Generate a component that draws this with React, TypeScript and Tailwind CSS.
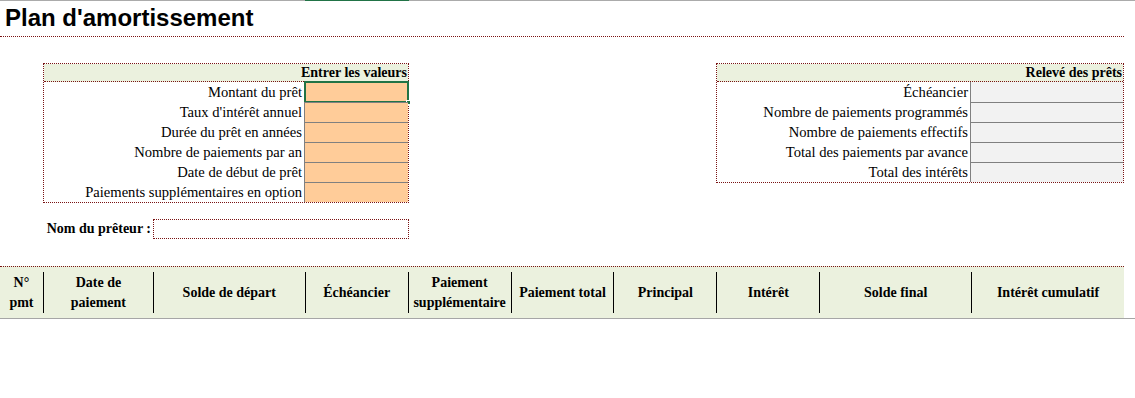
import React from "react";

const serif = "font-['Liberation_Serif',serif]";

const inputRows = [
  "Montant du prêt",
  "Taux d'intérêt annuel",
  "Durée du prêt en années",
  "Nombre de paiements par an",
  "Date de début de prêt",
  "Paiements supplémentaires en option",
];

const summaryRows = [
  "Échéancier",
  "Nombre de paiements programmés",
  "Nombre de paiements effectifs",
  "Total des paiements par avance",
  "Total des intérêts",
];

const columns: { label: string[]; width: string }[] = [
  { label: ["N°", "pmt"], width: "w-[44px]" },
  { label: ["Date de", "paiement"], width: "w-[110px]" },
  { label: ["Solde de départ"], width: "w-[152px]" },
  { label: ["Échéancier"], width: "w-[103px]" },
  { label: ["Paiement", "supplémentaire"], width: "w-[103px]" },
  { label: ["Paiement total"], width: "w-[103px]" },
  { label: ["Principal"], width: "w-[103px]" },
  { label: ["Intérêt"], width: "w-[103px]" },
  { label: ["Solde final"], width: "w-[152px]" },
  { label: ["Intérêt cumulatif"], width: "w-[152px]" },
];

const FieldBox = ({
  title,
  rows,
  width,
  cellWidth,
  cellBg,
  selectFirst,
}: {
  title: string;
  rows: string[];
  width: string;
  cellWidth: string;
  cellBg: string;
  selectFirst?: boolean;
}) => {
  return (
    <div className={`${width} border border-dotted border-[#7a1414]`}>
      <div className="flex h-[18px] items-center justify-end border-b border-dotted border-[#7a1414] bg-[#ebf1de] pr-[1px] text-[14px] font-bold leading-none text-black">
        {title}
      </div>
      {rows.map((label, idx) => (
        <div key={label} className="flex h-[20px] items-stretch">
          <div className="flex flex-1 items-center justify-end pr-[2px] text-[14.6px] leading-none text-black">
            {label}
          </div>
          <div
            className={`relative ${cellWidth} ${cellBg} border-l border-[#808080] ${
              idx > 0 ? "border-t" : ""
            }`}
          >
            {selectFirst && idx === 0 && (
              <>
                <div className="absolute -top-[1px] -left-[1px] -right-[1px] -bottom-[1px] border-2 border-[#217346]" />
                <div className="absolute -right-[3px] -bottom-[3px] h-[5px] w-[5px] border border-white bg-[#217346]" />
              </>
            )}
          </div>
        </div>
      ))}
    </div>
  );
};

export default function App() {
  return (
    <div className={`relative h-[398px] w-[1135px] overflow-hidden bg-white ${serif}`}>
      {/* sheet top edge with the active column marker */}
      <div className="flex h-px">
        <div className="w-[305px] bg-[#ababab]" />
        <div className="w-[104px] bg-[#217346]" />
        <div className="flex-1 bg-[#ababab]" />
      </div>

      <div className="w-[1124px] border-b border-dotted border-[#7a1414] pb-[4px] pl-[5px] pt-[3px]">
        <h1 className="font-['Liberation_Sans',Arial,sans-serif] text-[24px] font-bold leading-[28px] text-black">
          Plan d'amortissement
        </h1>
      </div>

      <div className="mt-[26px] flex w-[1124px] items-start justify-between pl-[43px]">
        <FieldBox
          title="Entrer les valeurs"
          rows={inputRows}
          width="w-[366px]"
          cellWidth="w-[104px]"
          cellBg="bg-[#ffcc99]"
          selectFirst
        />
        <FieldBox
          title="Relevé des prêts"
          rows={summaryRows}
          width="w-[408px]"
          cellWidth="w-[153px]"
          cellBg="bg-[#f2f2f2]"
        />
      </div>

      <div className="mt-[16px] flex h-[20px] items-stretch pl-[43px]">
        <div className="flex w-[110px] items-center justify-end pr-[2px] text-[14px] font-bold leading-none text-black">
          Nom du prêteur :
        </div>
        <div className="w-[256px] border border-dotted border-[#7a1414]" />
      </div>

      <div className="mt-[27px] w-[1135px] border-b border-[#a6a6a6]">
        <div className="flex h-[52px] w-[1124px] border-t border-dotted border-[#7a1414] bg-[#ebf1de]">
          {columns.map((col, idx) => (
            <div key={col.label.join(" ")} className={`${col.width} flex py-[5px]`}>
              <div
                className={`flex flex-1 flex-col items-center justify-center text-center text-[14px] font-bold leading-[20px] text-black ${
                  idx < columns.length - 1 ? "border-r border-black" : ""
                }`}
              >
                {col.label.map((line) => (
                  <span key={line}>{line}</span>
                ))}
              </div>
            </div>
          ))}
        </div>
      </div>
    </div>
  );
}
